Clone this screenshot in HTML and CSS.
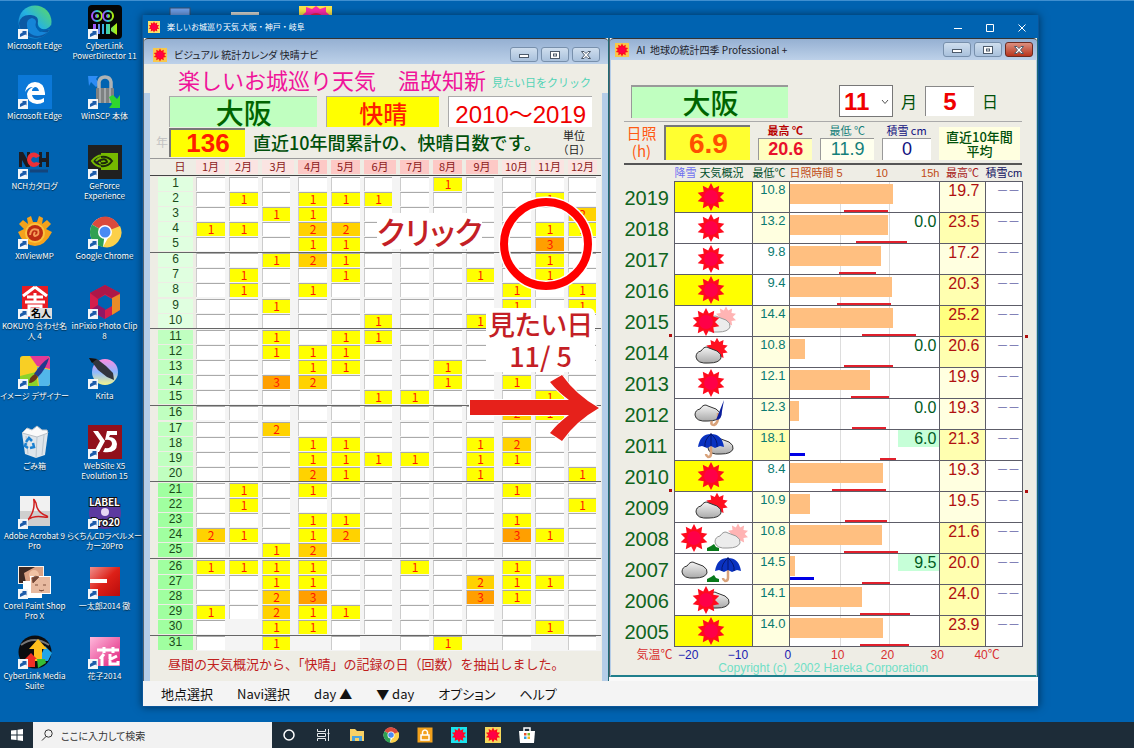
FILE: index.html
```html
<!DOCTYPE html>
<html lang="ja">

<head>
    <meta charset="UTF-8">
    <meta name="viewport" content="width=device-width, initial-scale=1.0">
    <title>楽しいお城巡り天気 大阪・神戸・岐阜</title>
    <link rel="stylesheet" href="styles.css">
</head>

<body>
    <!-- shared drawings -->
    <svg class="defs" width="0" height="0" aria-hidden="true">
        <defs>
            <linearGradient id="cloudFill" x1="0" y1="0" x2="0" y2="1">
                <stop offset="0" stop-color="#f4f4f4" />
                <stop offset="1" stop-color="#a9a9a9" />
            </linearGradient>
            <linearGradient id="edgeFill" x1="0" y1="1" x2="1" y2="0">
                <stop offset="0" stop-color="#0a6fd0" />
                <stop offset=".5" stop-color="#27b3e0" />
                <stop offset="1" stop-color="#5fdc5a" />
            </linearGradient>
            <linearGradient id="rainbow">
                <stop offset="0" stop-color="#b04cff" />
                <stop offset=".5" stop-color="#22c6e0" />
                <stop offset="1" stop-color="#b6f000" />
            </linearGradient>
            <linearGradient id="kritaFill" x1="0" y1="0" x2="0" y2="1">
                <stop offset="0" stop-color="#ff8ce0" />
                <stop offset=".5" stop-color="#8fb8ff" />
                <stop offset="1" stop-color="#f4f58c" />
            </linearGradient>
            <linearGradient id="redFill" x1="0" y1="0" x2="1" y2="1">
                <stop offset="0" stop-color="#f0908c" />
                <stop offset=".5" stop-color="#dd2018" />
                <stop offset="1" stop-color="#b80c0c" />
            </linearGradient>
            <linearGradient id="pinkFill" x1="0" y1="0" x2="1" y2="1">
                <stop offset="0" stop-color="#ffb9dc" />
                <stop offset="1" stop-color="#e0207c" />
            </linearGradient>
            <polygon id="star" points="0,-14 2.8,-8.6 8.2,-11.3 7.3,-5.3 13.3,-4.3 9,0 13.3,4.3 7.3,5.3 8.2,11.3 2.8,8.6 0,14 -2.8,8.6 -8.2,11.3 -7.3,5.3 -13.3,4.3 -9,0 -13.3,-4.3 -7.3,-5.3 -8.2,-11.3 -2.8,-8.6" />
            <g id="sun">
                <use href="#star" fill="#ff0a1e" />
                <circle r="7" fill="#ff0048" />
            </g>
            <g id="sunFaded">
                <use href="#star" fill="#ffb4b4" transform="scale(.75)" />
            </g>
            <g id="sunBehind">
                <use href="#star" fill="#ff1020" transform="scale(.8)" />
            </g>
            <path id="cloud" d="M-13 2Q-13-3-8-4-4-10 0-7L8-4Q13-1 12 3 10 8 0 8-12 9-13 2Z" fill="url(#cloudFill)" stroke="#333" stroke-width="1" />
            <path id="cloudPale" d="M-13 2Q-13-3-8-4-4-10 0-7L8-4Q13-1 12 3 10 8 0 8-12 9-13 2Z" fill="#ececec" stroke="#999" stroke-width="1" />
            <g id="umbrella">
                <path d="M0 0V9Q0 12-3 12-5 11-5 9" fill="none" stroke="#d9a27a" stroke-width="2.5" />
                <path d="M-13 2Q-11-11 0-11 11-11 13 2L9 1 4 3 0 1-4 3-9 1Z" fill="#0a32c0" />
                <path d="M0-12V1M0-11Q-7-5-6 2M0-11Q7-5 6 2" stroke="#05176e" fill="none" />
            </g>
            <g id="umbrellaClosed">
                <path d="M0 0Q1 10-4 12-8 12-6 8" fill="none" stroke="#d9a27a" stroke-width="2.5" />
                <path d="M6-13L-2 7Q4 7 4-2Z" fill="#0a1e9c" />
            </g>
            <path id="hill" d="M-6 4V1L-2-1 1-3 3 0 6 1V4Z" fill="#087a1a" />
            <g id="shortcut">
                <rect x="0" y="24" width="10" height="10" fill="#f2f6fa" />
                <path d="M2 32V29L5 27 4 26H8.500V30.500L7.500 29.500Z" fill="#1c5cab" />
            </g>
            <g id="chrome">
                <circle r="15" fill="#fff" />
                <path d="M0 0L-13-7.500A15 15 0 0 1 15-3Z" fill="#db4a3c" />
                <path d="M0 0L-13-7.500A15 15 0 0 0-2 15Z" fill="#2fa052" />
                <path d="M0 0L15-6A15 15 0 0 1-2 15L4 4Z" fill="#fcd04a" />
                <circle r="7" fill="#fff" />
                <circle r="5.500" fill="#4a8af4" />
            </g>
        </defs>
    </svg>

    <main class="desktop">
        <ul class="icons">
            <li><svg viewBox="0 0 34 34"><circle cx="17" cy="17" r="16.500" fill="url(#edgeFill)" /><path d="M1 18Q3 9 13 10 21 11 20 17 18 21 22 24 28 26 32 24 27 34 17 33 2 31 1 18Z" fill="#0c59a4" /><path d="M9 21Q8 14 14 13 18 14 18 17 16 23 22 26 27 28 30 27 20 34 13 29 9 26 9 21Z" fill="#1585d8" /><path d="M20 17Q19 22 24 24 30 25 33 20V24L22 27Q16 22 20 17Z" fill="#0063b1" /><use href="#shortcut" /></svg><span>Microsoft Edge</span></li>
            <li><svg viewBox="0 0 34 34"><rect width="34" height="34" rx="4" fill="#050505" /><g fill="none" stroke="url(#rainbow)" stroke-width="2"><circle cx="9" cy="11" r="5" /><circle cx="20" cy="11" r="5" /><circle cx="9" cy="11" r="1" /><circle cx="20" cy="11" r="1" /></g><path d="M5 19H8V29H5ZM10 19H12V29H10ZM14 19H16V29H14ZM18 19H22V29H18ZM23 23L29 18V30L23 26Z" fill="url(#rainbow)" /><use href="#shortcut" /></svg><span>CyberLink<br>PowerDirector 11</span></li>
            <li><svg viewBox="0 0 34 34"><rect width="34" height="34" fill="#0b78d8" /><path d="M7 17Q9 7 17 7 26 7 27 18V20H14Q15 25 20 25 23 25 26 23V27Q23 29 19 29 9 28 9 19 10 14 15 12 10 12 7 17ZM14 16H21Q20 12 17 12 14 13 14 16Z" fill="#fff" /><use href="#shortcut" /></svg><span>Microsoft Edge</span></li>
            <li><svg viewBox="0 0 34 34"><path d="M0 1L10 1 8 4 12 9 8 12 3 7 1 11Z" fill="#2d8cf5" /><path d="M11 14V7Q12 2 17 2 22 2 23 7V14" fill="none" stroke="#aeb3b5" stroke-width="3.500" /><rect x="8" y="13" width="18" height="15" rx="1" fill="#7d8182" /><path d="M12 13V28M17 13V28M22 13V28" stroke="#a4a8aa" stroke-width="2" /><path d="M21 22L25 20 29 24 32 20V33H21L24 29Z" fill="#30d62f" /><use href="#shortcut" /></svg><span>WinSCP 本体</span></li>
            <li><svg viewBox="0 0 34 34"><path d="M1 7H5L9 14V7H12V22H8L4 15V22H1ZM21 7H24V13H28V7H31V22H28V17H24V22H21Z" fill="#1c1c22" /><path d="M22 11Q18 6 13 8 9 10 9 15 10 21 15 22 20 22 22 18L18 17Q15 19 13 15 14 10 18 13Z" fill="#ea3038" /><path d="M12 26H30" stroke="#13457c" stroke-width="3" /><use href="#shortcut" /></svg><span>NCHカタログ</span></li>
            <li><svg viewBox="0 0 34 34"><rect width="34" height="34" fill="#202020" /><rect x="13" y="8" width="17" height="17" fill="#76b900" /><path d="M4 16Q10 9 16 11 22 12 25 16 20 23 14 22 7 21 4 16ZM8 16Q12 11 16 14 20 17 17 18 13 20 11 17" fill="none" stroke="#76b900" stroke-width="2" /><path d="M13 12Q20 11 24 16 20 22 13 21M13 15Q18 13 19 17 16 19 13 18" fill="none" stroke="#1c2b08" stroke-width="2" /><use href="#shortcut" /></svg><span>GeForce<br>Experience</span></li>
            <li><svg viewBox="0 0 34 34"><path d="M10 9L9 3 13 1 15 7H19L21 1 25 3 24 9 29 5 33 9 28 14 34 17Q27 31 17 31 5 30 0 17L6 14 1 9 5 5Z" fill="#f5a21c" /><circle cx="17" cy="18" r="10" fill="#fbc23d" /><circle cx="17" cy="18" r="8" fill="#bd2d12" /><path d="M12 20Q13 12 20 15 22 20 17 21 15 20 17 17" fill="none" stroke="#f59b56" stroke-width="2" /><use href="#shortcut" /></svg><span>XnViewMP</span></li>
            <li><svg viewBox="0 0 34 34"><use href="#chrome" x="17" y="17" /><use href="#shortcut" /></svg><span>Google Chrome</span></li>
            <li><svg viewBox="0 0 34 34"><rect x="4" y="1" width="26" height="31" fill="#e81c24" /><path d="M17 2L5 11M17 2L29 11M9 12H25M17 8V16M7 17H27M11 21H23V30H11Z" fill="none" stroke="#fff" stroke-width="3" /><rect x="12" y="23" width="22" height="11" fill="#dedede" /><text x="13" y="32" class="ink-label">名人</text><use href="#shortcut" /></svg><span>KOKUYO 合わせ名<br>人 4</span></li>
            <li><svg viewBox="0 0 34 34"><path d="M17 0L32 8V25L17 34 2 25V8ZM17 10L10 14V21L17 25 24 21V14Z" fill="#d51e4c" fill-rule="evenodd" /><path d="M2 8L17 0 32 8 24 13 17 9 10 14Z" fill="#ad1748" /><path d="M32 9V25L24 30V13Z" fill="#e98c28" /><path d="M2 25L10 20 17 24V34Z" fill="#8f1765" /><use href="#shortcut" /></svg><span>inPixio Photo Clip<br>8</span></li>
            <li><svg viewBox="0 0 34 34"><rect x="2" y="1" width="30" height="30" rx="3" fill="#f8cf25" /><path d="M12 1H29Q32 1 32 4V14L19 11Z" fill="#e33a96" /><path d="M19 12L32 15V28Q32 31 29 31H21Z" fill="#52b7ea" /><path d="M2 21L18 17 20 31H2Z" fill="#8bd22a" /><path d="M31 3Q24 7 16 19L20 22Q28 14 31 3Z" fill="#223a8c" /><path d="M17 19L20 22Q16 28 11 28 11 22 17 19Z" fill="#6a3419" /><use href="#shortcut" /></svg><span>イメージ デザイナー</span></li>
            <li><svg viewBox="0 0 34 34"><circle cx="17" cy="17" r="13" fill="url(#kritaFill)" /><path d="M1 3L9 4 18 11 25 18 26 25 19 22 10 15Z" fill="#32353d" /><path d="M1 3L9 4 4 8Z" fill="#111" /><use href="#shortcut" /></svg><span>Krita</span></li>
            <li><svg viewBox="0 0 34 34"><path d="M4 8L30 8 27 30 18 33 7 29Z" fill="#dfe5ea" /><path d="M4 8L9 3 14 5 19 1 24 5 29 5 30 8 19 12Z" fill="#fafafa" stroke="#b8c0c8" /><path d="M19 12L18 33M8 11L10 29M26 10L24 30" stroke="#b9c5cf" /><path d="M8 17L11 13 14 16M15 18L16 22 12 23M10 23L7 21 8 18" fill="none" stroke="#1a80d0" stroke-width="2.500" /></svg><span>ごみ箱</span></li>
            <li><svg viewBox="0 0 34 34"><rect width="34" height="34" fill="#91101c" /><path d="M5 6H10L17 16 11 27H6L12 16ZM29 6H19L17 15Q24 14 24 19 23 24 17 23L15 27Q29 29 29 19 28 12 21 12L22 10H29Z" fill="#fff" /><use href="#shortcut" /></svg><span>WebSite X5<br>Evolution 15</span></li>
            <li><svg viewBox="0 0 34 34"><rect x="2" y="1" width="30" height="30" fill="#f1f1f1" /><path d="M2 16H32V31H2Z" fill="#cfcfcf" /><path d="M8 27Q17 18 16 6 15 2 18 8 19 18 29 21 31 23 26 22 16 20 9 25 5 29 6 26" fill="none" stroke="#d02020" stroke-width="1.500" /><use href="#shortcut" /></svg><span>Adobe Acrobat 9<br>Pro</span></li>
            <li><svg viewBox="0 0 34 34"><circle cx="17" cy="18" r="16" fill="#5c3aa0" /><circle cx="17" cy="17" r="4" fill="#e7d8f5" /><text x="1" y="11" class="cd-label">LABEL</text><text x="3" y="31" class="cd-label">Pro20</text><use href="#shortcut" /></svg><span>らくちんCDラベルメー<br>カー20Pro</span></li>
            <li><svg viewBox="0 0 34 34"><rect x="0" y="1" width="26" height="18" fill="#f7f2ec" /><rect x="1" y="2" width="24" height="16" fill="#d9a184" /><path d="M1 2H17L6 8 8 18H1Z" fill="#3d2923" /><circle cx="16" cy="10" r="5" fill="#f1c3a4" /><rect x="5" y="16" width="19" height="17" fill="#fff" /><rect x="12" y="11" width="21" height="18" fill="#fff" /><rect x="13" y="12" width="19" height="16" fill="#e8baa0" /><path d="M14 13Q18 10 21 12L15 18ZM17 20H20M25 20H28M21 25Q23 27 26 25" stroke="#80503c" fill="#6e4638" /><use href="#shortcut" /></svg><span>Corel Paint Shop<br>Pro X</span></li>
            <li><svg viewBox="0 0 34 34"><rect x="2" y="2" width="30" height="29" fill="url(#redFill)" /><path d="M2 14H19V18H2Z" fill="#fff" /><use href="#shortcut" /></svg><span>一太郎2014 徹</span></li>
            <li><svg viewBox="0 0 34 34"><circle cx="17" cy="17" r="16.500" fill="#0c0d0f" /><path d="M3 10Q16 0 31 10" stroke="#777" fill="none" stroke-width="2" /><path d="M27 11L34 18 30 26H24V18Z" fill="#20a5e8" /><path d="M20 4L29 14H24V26H16V14H11Z" fill="#ffc01d" /><path d="M13 18L19 24H17V32H10V24H7Z" fill="#ef3026" /><path d="M19 24L27 24 28 28 20 33Z" fill="#36bd35" /><use href="#shortcut" /></svg><span>CyberLink Media<br>Suite</span></li>
            <li><svg viewBox="0 0 34 34"><rect x="2" y="2" width="30" height="29" fill="url(#pinkFill)" /><path d="M9 15H31M16 12V18M25 12V18M16 19L12 24M14 22V31M22 19V29H30V26M29 21L21 25" stroke="#fff" stroke-width="3" fill="none" /><use href="#shortcut" /></svg><span>花子2014</span></li>
        </ul>

        <div class="peek">
            <svg width="200" height="16" viewBox="0 0 200 16">
                <rect x="28" y="7" width="20" height="10" fill="#6f9fe8" stroke="#39506f" />
                <rect x="89" y="11" width="28" height="5" fill="#d9d9d3" />
                <rect x="157" y="5" width="33" height="11" fill="#fbe54a" />
                <path d="M158 16L164 11 164 6 170 8 174 5 178 8 184 6 184 11 190 16Z" fill="#ff2cae" />
                <path d="M166 16Q174 8 182 16Z" fill="#f2204e" />
            </svg>
        </div>

        <section class="app">
            <header class="app-title">
                <svg class="sun-icon" viewBox="-15 -15 30 30"><rect x="-15" y="-15" width="30" height="30" fill="#f8e36a" /><use href="#sun" /></svg>
                <h1>楽しいお城巡り天気 大阪・神戸・岐阜</h1>
                <div class="app-controls">
                    <button type="button" aria-label="最小化"><svg viewBox="0 0 8 8"><path d="M0 4.500H8" /></svg></button>
                    <button type="button" aria-label="最大化"><svg viewBox="0 0 8 8"><path d="M.5.5H7.500V7.500H.5Z" /></svg></button>
                    <button type="button" aria-label="閉じる"><svg viewBox="0 0 8 8"><path d="M.5.5L7.500 7.500M7.500.5L.5 7.500" /></svg></button>
                </div>
            </header>

            <div class="client">
                <section class="child calendar">
                    <header class="child-title tall">
                        <svg class="sun-icon" viewBox="-15 -15 30 30"><rect x="-15" y="-15" width="30" height="30" fill="#f8c84a" /><use href="#sun" /></svg>
                        <h2>ビジュアル 統計カレンダ 快晴ナビ</h2>
                        <div class="child-controls">
                            <button type="button" aria-label="最小化"><svg viewBox="0 0 12 10"><rect x="1.500" y="4.500" width="9" height="3" /></svg></button>
                            <button type="button" aria-label="元に戻す"><svg viewBox="0 0 12 10"><rect x="1.500" y="1.500" width="9" height="7" /><rect x="4.500" y="4" width="3" height="2" /></svg></button>
                            <button type="button" aria-label="閉じる"><svg viewBox="0 0 12 10"><path d="M1.500 1.500H4L6 3.500 8 1.500H10.500L7.500 5 10.500 8.500H8L6 6.500 4 8.500H1.500L4.500 5Z" /></svg></button>
                        </div>
                    </header>
                    <div class="banner">
                        <p class="banner-title">楽しいお城巡り天気　温故知新</p>
                        <p class="banner-hint">見たい日をクリック</p>
                    </div>
                    <div class="calendar-body">
                        <div class="fields">
                            <input class="place" type="text" value="大阪" aria-label="地点" readonly>
                            <input class="sky" type="text" value="快晴" aria-label="天気" readonly>
                            <input class="years" type="text" value="2010～2019" aria-label="期間" readonly>
                        </div>
                        <div class="summary">
                            <span class="faint">年</span>
                            <input class="total" id="total" type="text" value="136" readonly>
                            <label class="summary-text" for="total">直近10年間累計の、快晴日数です。</label>
                            <span class="unit">単位<br>（日）</span>
                        </div>
                        <table class="days">
                            <colgroup id="dayCols"></colgroup>
                            <thead>
                                <tr id="monthRow"></tr>
                            </thead>
                            <tbody id="dayRows"></tbody>
                        </table>
                        <p class="note">昼間の天気概況から、「快晴」の記録の日（回数）を抽出しました。</p>
                    </div>

                    <!-- guide marks over the calendar -->
                    <svg class="marks" width="470" height="430" viewBox="0 0 470 430">
                        <circle cx="402" cy="206" r="42" fill="none" stroke="#fff" stroke-width="11" />
                        <circle cx="402" cy="206" r="42" fill="none" stroke="#f00" stroke-width="8" />
                        <path d="M326 362H425Q414 354 406 344L418 337Q432 357 455 370 432 383 418 403L406 395Q414 385 425 377H326Z" fill="#e6211b" stroke="#fff" stroke-width="2" paint-order="stroke" />
                    </svg>
                    <p class="mark-text mark-click">クリック</p>
                    <p class="mark-text mark-day">見たい日<br>11/ 5</p>
                </section>

                <section class="child stats">
                    <header class="child-title">
                        <svg class="sun-icon" viewBox="-15 -15 30 30"><rect x="-15" y="-15" width="30" height="30" fill="#f8c84a" /><use href="#sun" /></svg>
                        <h2>AI&nbsp; 地球の統計四季 Professional +</h2>
                        <div class="child-controls">
                            <button type="button" aria-label="最小化"><svg viewBox="0 0 12 10"><rect x="1.500" y="4.500" width="9" height="3" /></svg></button>
                            <button type="button" aria-label="元に戻す"><svg viewBox="0 0 12 10"><rect x="1.500" y="1.500" width="9" height="7" /><rect x="4.500" y="4" width="3" height="2" /></svg></button>
                            <button class="close" type="button" aria-label="閉じる"><svg viewBox="0 0 12 10"><path d="M1.500 1.500H4L6 3.500 8 1.500H10.500L7.500 5 10.500 8.500H8L6 6.500 4 8.500H1.500L4.500 5Z" /></svg></button>
                        </div>
                    </header>
                    <div class="stats-body">
                        <div class="date-row">
                            <input class="place" type="text" value="大阪" aria-label="地点" readonly>
                            <div class="month-pick">
                                <select id="month">
                                    <option>11</option>
                                </select>
                                <svg viewBox="0 0 8 6"><path d="M1 1L4 4.500 7 1" fill="none" stroke="#555" /></svg>
                            </div>
                            <label for="month">月</label>
                            <input class="day" id="day" type="text" value="5">
                            <label for="day">日</label>
                        </div>
                        <div class="averages">
                            <label class="sun-label" for="sunHours">日照<br>(h)</label>
                            <input class="sun-hours" id="sunHours" type="text" value="6.9" readonly>
                            <div class="average high">
                                <label for="avgHigh">最高 ℃</label>
                                <input id="avgHigh" type="text" value="20.6" readonly>
                            </div>
                            <div class="average low">
                                <label for="avgLow">最低 ℃</label>
                                <input id="avgLow" type="text" value="11.9" readonly>
                            </div>
                            <div class="average snow">
                                <label for="avgSnow">積雪 cm</label>
                                <input id="avgSnow" type="text" value="0" readonly>
                            </div>
                            <p class="average-note">直近10年間<br>平均</p>
                        </div>
                        <table class="history">
                            <colgroup>
                                <col class="c-year">
                                <col class="c-sky">
                                <col class="c-low">
                                <col class="c-plot">
                                <col class="c-high">
                                <col class="c-snow">
                            </colgroup>
                            <thead>
                                <tr>
                                    <td></td>
                                    <th><span class="violet">降雪</span> 天気概況</th>
                                    <th class="teal">最低℃</th>
                                    <th class="scale"><div><span>日照時間 5</span><span>10</span><span>15h</span></div></th>
                                    <th class="red">最高℃</th>
                                    <th class="navy">積雪cm</th>
                                </tr>
                            </thead>
                            <tbody id="historyRows"></tbody>
                        </table>
                        <div class="axis">
                            <span class="axis-name">気温℃</span>
                            <span class="cold">−20</span>
                            <span class="cold">−10</span>
                            <span class="cold">0</span>
                            <span>10</span>
                            <span>20</span>
                            <span>30</span>
                            <span>40℃</span>
                        </div>
                        <p class="copyright">Copyright (c)&nbsp; 2002 Hareka Corporation</p>
                    </div>
                </section>
            </div>

            <nav class="menu">
                <button type="button">地点選択</button>
                <button type="button">Navi選択</button>
                <button type="button">day ▲</button>
                <button type="button">▼ day</button>
                <button type="button">オプション</button>
                <button type="button">ヘルプ</button>
            </nav>
        </section>
    </main>

    <footer class="taskbar">
        <button class="start" type="button" aria-label="スタート"><svg viewBox="0 0 12 12"><path d="M0 1.500L5.500 1V5.500H0ZM6.500.8L12 0V5.500H6.500ZM0 6.500H5.500V11L0 10.500ZM6.500 6.500H12V12L6.500 11.200Z" fill="#fff" /></svg></button>
        <div class="search">
            <svg viewBox="0 0 12 12"><circle cx="7.500" cy="4.500" r="3.700" /><path d="M5 7.500L1 11.500" /></svg>
            <input type="text" placeholder="ここに入力して検索" aria-label="検索">
        </div>
        <div class="tasks">
            <button type="button" aria-label="Cortana"><svg viewBox="0 0 16 16"><circle cx="8" cy="8" r="5" fill="none" stroke="#fff" stroke-width="1.500" /></svg></button>
            <button type="button" aria-label="タスクビュー"><svg viewBox="0 0 16 16"><path d="M2.500 2V4.500H10.500V2M2.500 14V11.500H10.500V14M2.500 6.500H10.500V9.500H2.500ZM13.500 2V14M12.500 6.500H14.500" fill="none" stroke="#e5e9ec" /></svg></button>
            <button type="button" aria-label="エクスプローラー"><svg viewBox="0 0 16 16"><path d="M1 2H6L8 4H15V14H1Z" fill="#f8d165" /><path d="M3 14V9H13V14H10V11H6V14Z" fill="#4aa3df" /></svg></button>
            <button type="button" aria-label="Chrome"><svg viewBox="-16 -16 32 32"><use href="#chrome" /></svg></button>
            <button type="button" aria-label="ロック"><svg viewBox="0 0 16 16"><rect x=".5" y=".5" width="15" height="15" fill="#f2a11c" /><path d="M5.500 8V5Q6 3 8 3 10 3 10.500 5V8M4 8H12V13H4Z" fill="none" stroke="#fff" stroke-width="1.500" /></svg></button>
            <button type="button" aria-label="天気"><svg viewBox="-15 -15 30 30"><rect x="-15" y="-15" width="30" height="30" fill="#19e4ee" /><use href="#sun" /></svg></button>
            <button type="button" aria-label="快晴"><svg viewBox="-15 -15 30 30"><rect x="-15" y="-15" width="30" height="30" fill="#f4d85c" /><use href="#sun" /></svg></button>
            <button type="button" aria-label="ストア"><svg viewBox="0 0 16 16"><path d="M5 4V1H11V4" fill="none" stroke="#fff" stroke-width="1.500" /><path d="M0 4H16L15 16H1Z" fill="#fff" /><path d="M5 6H7.500V8.500H5Z" fill="#e8502c" /><path d="M8.500 6H11V8.500H8.500Z" fill="#7db928" /><path d="M5 9.500H7.500V12H5Z" fill="#2ba0e0" /><path d="M8.500 9.500H11V12H8.500Z" fill="#f4b41e" /></svg></button>
        </div>
    </footer>

    <script src="script.js"></script>
</body>

</html>
```

FILE: styles.css
```css
:root {
    --desktop: #0063b1;
    --cream: #eeede5;
    --frame: #b5cde8;
    --yellow: #ffff00;
    --green: #c0ffc0;
}

* {
    box-sizing: border-box;
}

body {
    margin: 0;
    min-height: 100vh;
    display: flex;
    flex-direction: column;
    background-color: var(--desktop);
    font-family: "Noto Sans CJK JP", sans-serif;
    font-size: 12px;
    line-height: 1;
}

h1,
h2,
p,
ul {
    margin: 0;
    padding: 0;
    font-weight: normal;
}

button,
input,
select {
    font-family: inherit;
    border: none;
    border-radius: 0;
    padding: 0;
    background: none;
    min-width: 0;
}

.defs {
    position: absolute;
}

.desktop {
    flex: 1;
    display: flex;
    align-items: flex-start;
    position: relative;
    border-top: 1px solid #3f8fd0;
    padding-right: 95px;
}

/* desktop icons */
.icons {
    list-style: none;
    width: 142px;
    flex: none;
    display: grid;
    grid-template-columns: 69px 71px;
    grid-auto-rows: 70px;
}

.icons li {
    display: flex;
    flex-direction: column;
    align-items: center;
    padding-top: 4px;
    color: #fff;
    font-size: 8px;
    line-height: 10px;
    text-align: center;
    white-space: nowrap;
    font-feature-settings: "palt";
}

.icons svg {
    width: 34px;
    height: 34px;
    flex: none;
}

.icons span {
    margin-top: 2px;
    text-shadow: 0 1px 1px #023;
}

.ink-label {
    font-size: 10px;
    font-weight: bold;
}

.cd-label {
    font-size: 10px;
    font-weight: bold;
    fill: #fff;
    stroke: #111;
    stroke-width: 2;
    paint-order: stroke;
}

.peek {
    position: absolute;
    left: 142px;
    top: 0;
}

/* main window */
.app {
    flex: 1;
    min-width: 0;
    margin-top: 14px;
    position: relative;
    box-shadow: 0 0 8px rgba(0, 0, 0, 0.5);
    border: 1px solid #0a5599;
    border-top: none;
}

.app-title {
    height: 23px;
    display: flex;
    align-items: center;
    background-color: var(--desktop);
    color: #fff;
    padding-left: 5px;
}

.sun-icon {
    width: 14px;
    height: 14px;
    flex: none;
}

.app-title .sun-icon {
    width: 12px;
    height: 12px;
}

.app-title h1 {
    font-size: 8px;
    margin-left: 7px;
    flex: 1;
}

.app-controls {
    display: flex;
}

.app-controls button {
    width: 32px;
    height: 22px;
}

.app-controls svg {
    width: 8px;
    height: 8px;
    stroke: #fff;
    fill: none;
}

.client {
    display: grid;
    grid-template-columns: 467fr 429fr;
    background-color: #f9f9f9;
}

.child {
    position: relative;
    align-self: start;
    min-width: 0;
    border-left: 1px solid #56646f;
    border-right: 1px solid #1f6b74;
}

.child-title {
    height: 22px;
    display: flex;
    align-items: center;
    padding: 0 4px 0 5px;
    background-image: linear-gradient(#95b0d2, #bdd1e9);
    border-top: 1px solid #333;
    border-radius: 4px 4px 0 0;
}

.child-title.tall {
    height: 26px;
    padding: 6px 8px 0 9px;
}

.child-title h2 {
    flex: 1;
    margin-left: 7px;
    font-size: 10px;
    color: #1c222a;
    font-feature-settings: "palt";
    white-space: nowrap;
}

.child-controls {
    display: flex;
    gap: 3px;
}

.child-controls button {
    width: 28px;
    height: 15px;
    border: 1px solid #7890ac;
    border-radius: 3px;
    background-image: linear-gradient(#cfdeee, #a9c1dc);
    display: flex;
    justify-content: center;
    align-items: center;
}

.child-controls svg {
    width: 12px;
    height: 10px;
    fill: #fff;
    stroke: #4c5a6b;
}

.child-controls .close {
    background-image: linear-gradient(#dc9080, #b8341c);
    border-color: #6b2a20;
}

/* calendar window */
.banner {
    height: 29px;
    display: flex;
    align-items: center;
    padding-left: 34px;
    gap: 6px;
    background-color: var(--cream);
    white-space: nowrap;
}

.banner-title {
    font-size: 22px;
    color: #f0149a;
}

.banner-hint {
    font-size: 11px;
    color: #52d3b6;
    padding-top: 8px;
}

.calendar-body {
    background-color: var(--cream);
    border-left: 6px solid var(--frame);
    border-right: 6px solid var(--frame);
    padding: 3px 4px 0 0;
}

.fields {
    display: grid;
    grid-template-columns: 149fr 113fr 145fr;
    gap: 9px;
    padding: 0 6px 0 19px;
}

.fields input {
    width: 100%;
    height: 31px;
    text-align: center;
    border-top: 1px solid #aaa;
    border-left: 1px solid #aaa;
}

.place {
    background-color: var(--green);
    color: #006400;
    font-size: 28px;
    line-height: 28px;
    font-weight: 500;
}

.fields .sky {
    background-color: var(--yellow);
    color: #ff1c00;
    font-size: 24px;
    font-weight: 500;
}

.fields .years {
    background-color: #fff;
    color: #f00000;
    font-family: "Liberation Sans", "Noto Sans CJK JP", sans-serif;
    font-size: 24px;
}

.summary {
    display: flex;
    align-items: center;
    padding: 0 8px 1px 6px;
    height: 31px;
}

.faint {
    width: 13px;
    font-size: 12px;
    color: #c3c3c3;
}

.total {
    width: 76px;
    height: 29px;
    border-top: 2px solid #777;
    border-left: 2px solid #777;
    background-color: var(--yellow);
    color: #ff1c00;
    font-family: "Liberation Sans", sans-serif;
    font-size: 26px;
    font-weight: bold;
    text-align: center;
}

.summary-text {
    flex: 1;
    margin-left: 8px;
    font-size: 18px;
    font-weight: 500;
    color: #00500a;
    white-space: nowrap;
}

.unit {
    font-size: 11px;
    line-height: 14px;
    text-align: center;
    color: #222;
    white-space: nowrap;
}

.days {
    width: 100%;
    height: 493px;
    table-layout: fixed;
    border-collapse: separate;
    border-spacing: 0;
    border-top: 1px solid #999;
    font-size: 12px;
}

.days th,
.days td {
    padding: 0;
    font-weight: normal;
    text-align: center;
}

.col-day {
    width: 46px;
}

.col-month {
    width: 33px;
}

.col-wide {
    width: 36px;
}

.days thead th {
    height: 17px;
    border-bottom: 1px solid #444;
    color: #8c1a1a;
    font-size: 11px;
    padding-right: 4px;
}

.days thead span {
    display: block;
    height: 14px;
    line-height: 13px;
    background-color: #fbe4e2;
}

.days thead .warm span {
    background-color: #fdc9c6;
}

.days thead .plain {
    padding: 0 0 0 14px;
}

.days thead .plain span {
    background: none;
}

.days tbody th {
    padding: 0 3px 0 8px;
    color: #1b4b1b;
    font-family: "Liberation Sans", sans-serif;
}

.days tbody th span {
    display: block;
    height: 14px;
    line-height: 13px;
    background-color: #e0ffe0;
}

.days .mid th span {
    background-color: var(--green);
}

.days .late th span {
    background-color: #a0ffa0;
}

.days tbody td {
    background-color: #f4f4f4;
    padding-right: 4px;
}

.days tbody td:nth-child(3n + 4) {
    padding-right: 8px;
}

.days tbody td:last-child {
    padding-right: 5px;
}

.days tbody td span {
    display: block;
    height: 14px;
    line-height: 12px;
    border-top: 1px solid #aaa;
    border-left: 1px solid #ccc;
    background-color: #fff;
    color: #ff1800;
}

.days tbody .n1 {
    background-color: var(--yellow);
}

.days tbody .n2 {
    background-color: #ffd200;
}

.days tbody .n3 {
    background-color: #ff9f00;
}

.days tbody td .none {
    background: none;
    border-color: transparent;
}

.days .rule > * {
    border-top: 1px solid #666;
}

.note {
    padding: 4px 0 7px 18px;
    height: 30px;
    font-size: 13px;
    line-height: 18px;
    color: #c0201c;
    white-space: nowrap;
}

.marks {
    position: absolute;
    left: 0;
    top: 0;
}

.mark-text {
    position: absolute;
    background-color: #fff;
    color: #c41f26;
    font-weight: 500;
    border-radius: 6px;
    white-space: nowrap;
    font-feature-settings: "palt";
}

.mark-click {
    left: 233px;
    top: 175px;
    font-size: 31px;
    line-height: 36px;
}

.mark-day {
    left: 342px;
    top: 270px;
    padding: 0 2px;
    font-size: 27px;
    line-height: 32px;
    text-align: center;
}

/* statistics window */
.stats-body {
    background-color: var(--cream);
    border-left: 1px solid var(--frame);
    border-right: 1px solid var(--frame);
    border-bottom: 2px solid #1f7f8c;
    padding: 25px 14px 0 13px;
}

.date-row {
    display: flex;
    align-items: center;
    height: 37px;
    padding: 0 24px 4px 7px;
    border-bottom: 1px solid #aaa;
    font-size: 16px;
    color: #00500a;
}

.date-row .place {
    width: 157px;
    height: 33px;
    text-align: center;
    border-top: 2px solid #999;
    border-left: 1px solid #999;
    margin-right: auto;
}

.month-pick {
    position: relative;
}

.month-pick select {
    appearance: none;
    width: 54px;
    height: 32px;
    padding-left: 4px;
    border: 1px solid #777;
    background-color: #fff;
    color: #f00000;
    font-family: "Liberation Sans", sans-serif;
    font-size: 24px;
    font-weight: bold;
}

.month-pick svg {
    position: absolute;
    right: 4px;
    top: 14px;
    width: 8px;
    height: 6px;
}

.date-row label {
    margin: 0 8px;
}

.date-row label:last-child {
    margin-right: 0;
}

.day {
    width: 49px;
    height: 30px;
    border-top: 1px solid #888;
    border-left: 1px solid #888;
    background-color: #fff;
    color: #f00000;
    font-family: "Liberation Sans", sans-serif;
    font-size: 24px;
    font-weight: bold;
    text-align: center;
}

.averages {
    display: flex;
    align-items: flex-end;
    justify-content: space-between;
    height: 43px;
    padding: 0 2px 3px 2px;
    border-bottom: 2px solid #555;
    text-align: center;
}

.sun-label {
    font-size: 15px;
    line-height: 18px;
    color: #ff5a14;
}

.sun-hours {
    width: 86px;
    height: 35px;
    border-top: 2px solid #777;
    border-left: 2px solid #777;
    background-color: #ffff30;
    color: #ff5000;
    font-family: "Liberation Sans", sans-serif;
    font-size: 28px;
    font-weight: bold;
    text-align: center;
}

.average {
    display: flex;
    flex-direction: column;
    align-items: center;
    gap: 2px;
    font-size: 11px;
    white-space: nowrap;
}

.average input {
    width: 54px;
    height: 22px;
    border-top: 1px solid #999;
    border-left: 1px solid #999;
    font-family: "Liberation Sans", sans-serif;
    font-size: 18px;
    color: inherit;
    text-align: center;
}

.high {
    color: #b80000;
    font-weight: bold;
}

.high input {
    background-color: #ffffc0;
    color: #e8102c;
    font-weight: bold;
}

.low {
    color: #14807a;
}

.low input {
    background-color: #ffffee;
}

.snow {
    color: #101080;
}

.snow input {
    width: 49px;
    background-color: #fff;
}

.average-note {
    width: 81px;
    height: 33px;
    padding-top: 3px;
    background-color: #ffffe0;
    color: #00500a;
    font-size: 13px;
    line-height: 14px;
    font-weight: 500;
}

.history {
    width: 100%;
    table-layout: fixed;
    border-collapse: separate;
    border-spacing: 0;
    font-family: "Liberation Sans", "Noto Sans CJK JP", sans-serif;
}

.c-year {
    width: 50px;
}

.c-sky {
    width: 78px;
}

.c-low {
    width: 37px;
}

.c-plot {
    width: 150px;
}

.c-high {
    width: 46px;
}

.c-snow {
    width: 38px;
}

.history th,
.history td {
    padding: 0;
    font-weight: normal;
}

.history thead th {
    height: 16px;
    font-size: 11px;
    color: #004f2a;
    white-space: nowrap;
    text-align: left;
}

.history thead .red {
    color: #a81818;
    text-align: center;
}

.history thead .navy {
    color: #101060;
}

.history thead .violet {
    color: #7070f0;
}

.history thead .scale {
    color: #c04a14;
}

.scale div {
    display: flex;
    justify-content: space-between;
}

.history tbody th {
    position: relative;
    font-size: 20px;
    line-height: 20px;
    padding-top: 2px;
    color: #0f6420;
    text-align: left;
}

.history tbody td {
    height: 31px;
    background-color: #fff;
    border-top: 1px solid #5d5d68;
    border-left: 1px solid #5d5d68;
    vertical-align: top;
}

.history tbody td:last-child {
    border-right: 1px solid #5d5d68;
    position: relative;
}

.history tbody tr:last-child td {
    border-bottom: 1px solid #5d5d68;
}

.history tbody .clear {
    background-color: var(--yellow);
}

.history svg {
    display: block;
    width: 76px;
    height: 30px;
}

.history .t-low,
.history .t-high,
.history .t-snow {
    text-align: right;
}

.history .t-low {
    font-size: 13px;
    line-height: 15px;
    color: #0a7a70;
    padding-right: 4px;
}

.history .t-high {
    font-size: 16px;
    line-height: 17px;
    color: #b01010;
    padding-right: 6px;
}

.history .t-snow {
    font-size: 9px;
    line-height: 16px;
    color: #202080;
    padding-right: 4px;
}

.history tbody .pale {
    background-color: #ffffe0;
}

.history tbody .soft {
    background-color: #ffffb0;
}

.history tbody .strong {
    background-color: #ffff80;
}

.plot {
    position: relative;
    height: 30px;
    padding-top: 2px;
    background-image: linear-gradient(#ddd, #ddd), linear-gradient(#ddd, #ddd);
    background-size: 1px 100%;
    background-repeat: no-repeat;
    background-position: 33.3% 0, 66.6% 0;
}

.sunshine {
    height: 20px;
    background-color: #ffbf80;
}

.rain {
    height: 3px;
    margin: 1px 0 2px;
    background-color: #0000e6;
}

.range {
    height: 2px;
    background-color: #e0202c;
}

.rain-amount {
    position: absolute;
    right: 0;
    top: 0;
    width: 41px;
    padding-right: 3px;
    font-size: 16px;
    line-height: 17px;
    text-align: right;
    color: #005a1e;
}

.rain-amount.wet {
    background-color: #c6ffd8;
}

.dot::after {
    content: "";
    position: absolute;
    top: -2px;
    width: 3px;
    height: 3px;
    background-color: #b01010;
}

th.dot::after {
    right: 2px;
}

td.dot::after {
    right: -6px;
}

.axis {
    display: grid;
    grid-template-columns: 39fr repeat(7, 50fr) 10fr;
    height: 17px;
    line-height: 17px;
    font-size: 12px;
    font-family: "Liberation Sans", "Noto Sans CJK JP", sans-serif;
    color: #d83030;
    text-align: center;
}

.axis .cold {
    color: #2020b0;
}

.axis-name {
    padding-left: 12px;
    min-width: 0;
    white-space: nowrap;
}

.copyright {
    height: 11px;
    line-height: 8px;
    font-family: "Liberation Sans", sans-serif;
    font-size: 12px;
    text-align: center;
    color: #6fdfc6;
    white-space: nowrap;
}

/* menu */
.menu {
    display: flex;
    align-items: center;
    gap: 24px;
    height: 25px;
    padding-left: 18px;
    background-color: #f4f4f4;
}

.menu button {
    font-size: 13px;
    line-height: 20px;
    color: #111;
    white-space: nowrap;
    font-feature-settings: "palt";
}

/* taskbar */
.taskbar {
    display: flex;
    align-items: stretch;
    height: 26px;
    background-color: #1d2c38;
}

.start {
    width: 33px;
}

.start svg {
    width: 12px;
    height: 12px;
}

.search {
    display: flex;
    align-items: center;
    gap: 8px;
    width: 239px;
    padding-left: 8px;
    background-color: #f2f2f2;
}

.search svg {
    width: 12px;
    height: 12px;
    fill: none;
    stroke: #333;
}

.search input {
    flex: 1;
    font-size: 10px;
    font-feature-settings: "palt";
}

.search input::placeholder {
    color: #333;
    opacity: 1;
}

.tasks {
    display: flex;
}

.tasks button {
    width: 34px;
    display: flex;
    align-items: center;
    justify-content: center;
}

.tasks svg {
    width: 16px;
    height: 16px;
}
```

FILE: script.js
```js
// clear days per month, one string per day (Jan..Dec), "-" where the date does not exist
const days = [
    '000000010000', '010111000010', '001100000002', '110220000011', '000110000030',
    '001210000010', '010010001010', '010100000101', '001000000101', '000001001000',
    '001011000000', '001110000000', '000110010000', '003200010100', '000001100010',
    '000000000210', '002000000000', '000110001200', '000111101100', '000210001001',
    '010100000100', '010000000001', '000110000100', '210120000310', '001200000000',
    '111100100100', '001100002110', '002300003100', '102110000000', '0-1100000010',
    '0-1-0-01-0-0'
];

const dayCols = document.getElementById('dayCols');
const monthRow = document.getElementById('monthRow');
const dayRows = document.getElementById('dayRows');

dayCols.innerHTML = '<col class="col-day">';
monthRow.innerHTML = '<th class="plain"><span>日</span></th>';
for (let m = 1; m <= 12; m++) {
    const wide = m % 3 === 0 && m < 12;
    dayCols.innerHTML += `<col class="${wide ? 'col-wide' : 'col-month'}">`;
    monthRow.innerHTML += `<th class="${m >= 4 && m <= 9 ? 'warm' : ''}"><span>${m}月</span></th>`;
}

dayRows.innerHTML = days.map((row, i) => {
    const day = i + 1;
    const classes = [];
    if (i > 0 && i % 5 === 0) classes.push('rule');
    if (day > 20) classes.push('late');
    else if (day > 10) classes.push('mid');
    const cells = [...row].map(n => {
        const cls = n === '-' ? 'none' : `n${n}`;
        return `<td><span class="${cls}">${n > 0 ? n : ''}</span></td>`;
    }).join('');
    return `<tr class="${classes.join(' ')}"><th><span>${day}</span></th>${cells}</tr>`;
}).join('');

// drawings for each kind of weather: [shape, x, y]
const skies = {
    sun: [['sun', 36, 15]],
    sunThenHaze: [['sunFaded', 51, 11], ['cloudPale', 43, 18], ['sun', 31, 16]],
    cloudSun: [['sunBehind', 42, 12], ['cloud', 34, 18]],
    cloudShower: [['cloud', 33, 14], ['umbrellaClosed', 43, 14]],
    umbrellaCloud: [['cloud', 46, 16], ['umbrella', 36, 15]],
    sunToHaze: [['sun', 19, 15], ['hill', 38, 24], ['sunFaded', 63, 11], ['cloudPale', 53, 17]],
    cloudToRain: [['cloud', 20, 16], ['hill', 38, 24], ['umbrella', 53, 15]],
    sunCloud: [['cloud', 42, 15], ['sun', 31, 15]]
};

const history = [
    { year: 2019, sky: 'sun', clear: true, low: 10.8, high: 19.7, hours: 10.3 },
    { year: 2018, sky: 'sun', low: 13.2, high: 23.5, hours: 9.8, rain: '0.0' },
    { year: 2017, sky: 'sun', low: 9.8, high: 17.2, hours: 9.1 },
    { year: 2016, sky: 'sun', clear: true, low: 9.4, high: 20.3, hours: 10.2 },
    { year: 2015, sky: 'sunThenHaze', low: 14.4, high: 25.2, hours: 10.3 },
    { year: 2014, sky: 'cloudSun', low: 10.8, high: 20.6, hours: 1.5, rain: '0.0', dot: true },
    { year: 2013, sky: 'sun', low: 12.1, high: 19.9, hours: 8 },
    { year: 2012, sky: 'cloudShower', low: 12.3, high: 19.3, hours: 0.9, rain: '0.0' },
    { year: 2011, sky: 'umbrellaCloud', low: 18.1, high: 21.3, hours: 0, rain: '6.0' },
    { year: 2010, sky: 'sun', clear: true, low: 8.4, high: 19.3, hours: 9.3 },
    { year: 2009, sky: 'cloudSun', low: 10.9, high: 19.5, hours: 2, dot: true },
    { year: 2008, sky: 'sunToHaze', low: 10.8, high: 21.6, hours: 9.2 },
    { year: 2007, sky: 'cloudToRain', low: 14.5, high: 20.0, hours: 0.5, rain: '9.5' },
    { year: 2006, sky: 'sunCloud', low: 14.1, high: 24.0, hours: 7.2 },
    { year: 2005, sky: 'sun', clear: true, low: 14.0, high: 23.9, hours: 9.3 }
];

function lowTint(t) {
    if (t < 10) return '';
    return t < 15 ? 'pale' : 'soft';
}

function highTint(t) {
    if (t < 20) return 'pale';
    return t < 25 ? 'soft' : 'strong';
}

// the plot is 15 hours wide, which is also 30 degrees
document.getElementById('historyRows').innerHTML = history.map(h => {
    const shapes = skies[h.sky].map(([id, x, y]) => `<use href="#${id}" x="${x}" y="${y}" />`).join('');
    const dot = h.dot ? 'dot' : '';
    const wet = h.rain > 0 ? 'wet' : '';
    const amount = h.rain ? `<span class="rain-amount ${wet}">${h.rain}</span>` : '';
    return `<tr>
        <th class="${dot}">${h.year}</th>
        <td class="${h.clear ? 'clear' : ''}"><svg viewBox="0 0 76 30">${shapes}</svg></td>
        <td class="t-low ${lowTint(h.low)}">${h.low.toFixed(1)}</td>
        <td><div class="plot">
            <div class="sunshine" style="width: ${h.hours / 15 * 100}%"></div>
            <div class="rain" style="width: ${(h.rain || 0) * 1.65}%"></div>
            <div class="range" style="margin-left: ${h.low / 30 * 100}%; width: ${(h.high - h.low) / 30 * 100}%"></div>
            ${amount}
        </div></td>
        <td class="t-high ${highTint(h.high)}">${h.high.toFixed(1)}</td>
        <td class="t-snow ${dot}">— —</td>
    </tr>`;
}).join('');
```
